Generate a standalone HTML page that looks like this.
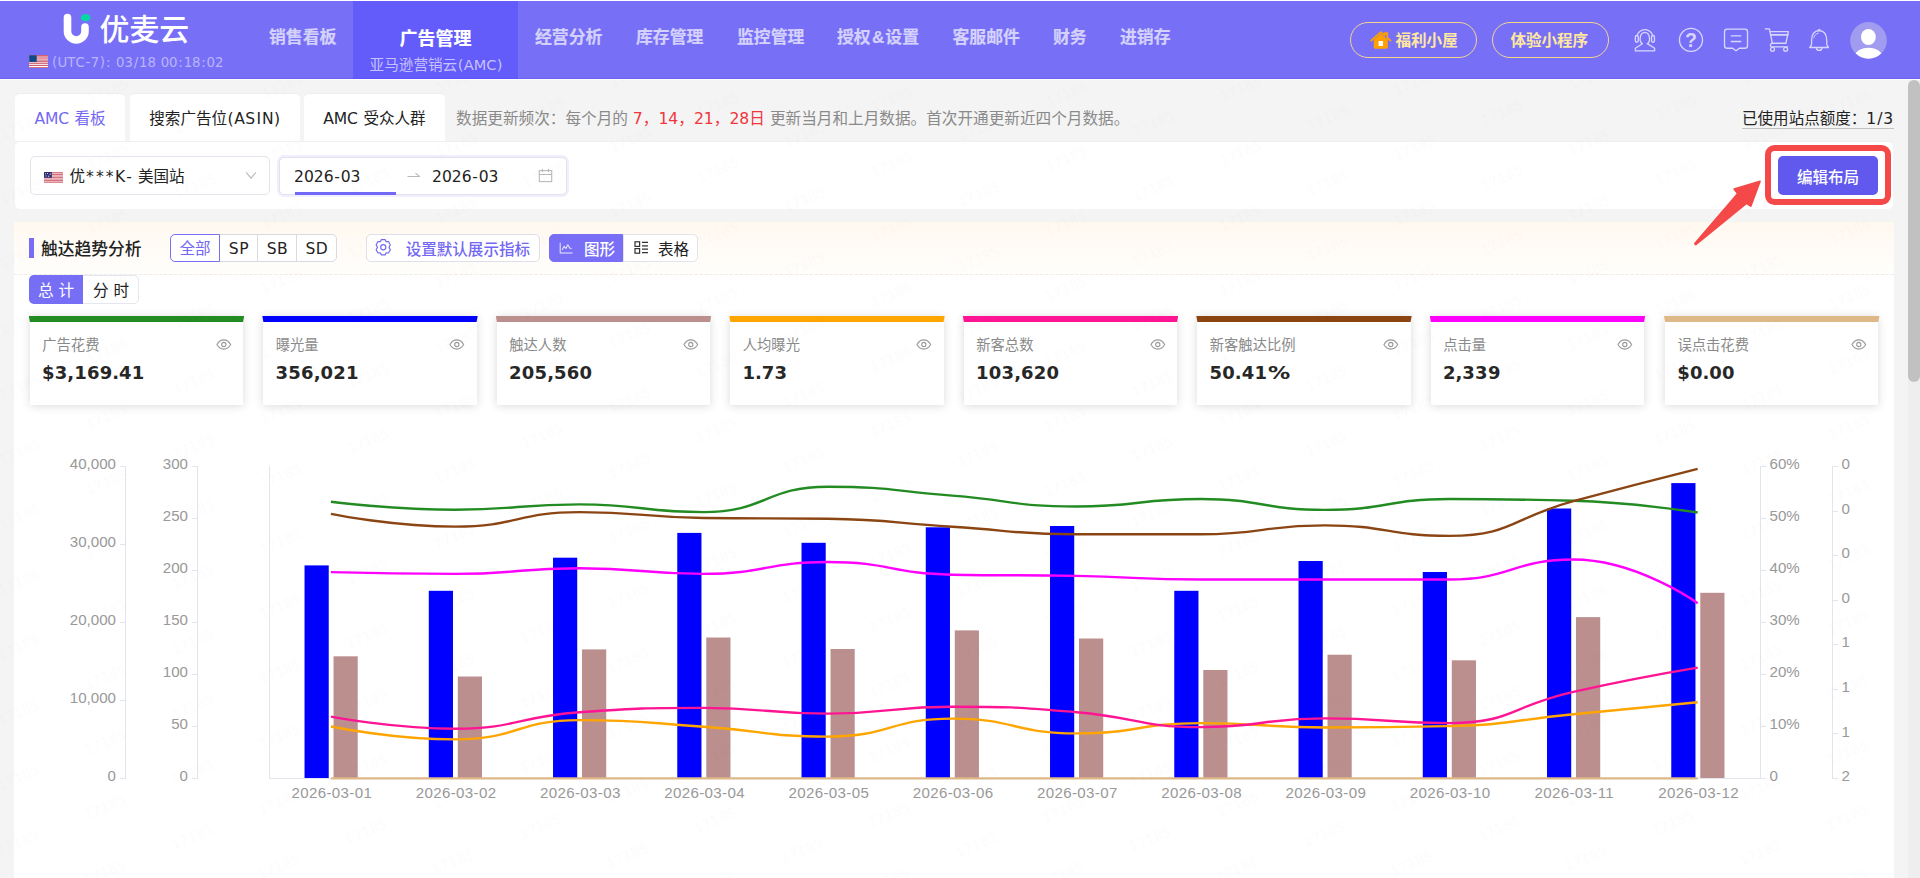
<!DOCTYPE html>
<html lang="zh-CN">
<head>
<meta charset="utf-8">
<title>优麦云 - AMC 看板</title>
<style>
*{box-sizing:border-box;margin:0;padding:0}
html,body{width:1920px;height:878px;overflow:hidden;background:#f4f4f4}
body{position:relative;font-family:"DejaVu Sans","Noto Sans CJK SC",sans-serif;font-size:15.55px;color:#222}
.abs{position:absolute}
.t{position:absolute;white-space:nowrap}
svg{display:block;overflow:visible}
/* header */
#topline{position:absolute;left:0;top:0;width:1920px;height:1px;background:#fff}
#hd{position:absolute;left:0;top:1px;width:1920px;height:79px;background:#7770f7}
#navact{position:absolute;left:353px;top:0;width:165px;height:78px;background:#635bfa}
.nav{position:absolute;top:25px;height:24px;line-height:24px;font-weight:bold;font-size:16.875px;color:#d4d1fc;-webkit-text-stroke:.2px #d4d1fc;white-space:nowrap;font-family:"Liberation Sans","Noto Sans CJK SC",sans-serif}
.pill{position:absolute;top:21px;height:36px;border:1.2px solid #f5d490;border-radius:18px}
.pill span{position:absolute;top:1px;height:33px;line-height:33px;color:#ffe7a0;font-weight:bold;font-size:15.55px;white-space:nowrap;font-family:"Liberation Sans","Noto Sans CJK SC",sans-serif}
.hic{position:absolute;fill:none;stroke:#d8d5fd;stroke-width:1.4;stroke-linecap:round;stroke-linejoin:round}
/* tabs */
.tab{position:absolute;top:93px;height:48px;border-top:1px solid #ededed;background:#fff;border-radius:5px 5px 0 0;text-align:center;line-height:50.4px;font-size:15.55px;white-space:nowrap}
.card{position:absolute;background:#fff;border-radius:5px}
.inp{position:absolute;top:156px;height:39px;background:#fff;border:1px solid #e3e5ec;border-radius:5px}
/* section */
.seg{position:absolute;top:234.2px;height:27.6px;line-height:29.6px;text-align:center;font-size:15.55px;border:1px solid #d9d9df;background:#fff;white-space:nowrap}
.kc{position:absolute;top:316px;width:213.2px;height:89px;background:#fff;box-shadow:0 1px 9px rgba(0,0,0,.15)}
.kc i{position:absolute;left:-1.2px;top:-0.4px;width:215.6px;height:6.4px;clip-path:polygon(0 0,100% 0,calc(100% - 1.2px) 100%,1.2px 100%)}
.kc .l{position:absolute;left:12.4px;top:19.3px;height:20px;line-height:20px;font-size:14.3px;color:#8a8a8a;white-space:nowrap}
.kc .v{position:absolute;left:12px;top:45px;height:24px;line-height:24px;font-size:18px;font-weight:bold;color:#272727;white-space:nowrap}
.kc svg{position:absolute;left:186px;top:22.8px}
</style>
</head>
<body>
<div id="topline"></div>
<div id="hd">
  <div id="navact"></div>
  <div class="abs" style="left:0;top:77px;width:1920px;height:1px;background:rgba(60,40,240,.16)"></div>
  <div class="abs" style="left:0;top:78px;width:1920px;height:1px;background:#fdfdf9"></div>
  <svg class="abs" style="left:60px;top:9px" width="34" height="36" viewBox="60 10 34 36">
    <path d="M67.5 17.5V31.25a8.75 8.75 0 0 0 17.5 0V27" fill="none" stroke="#fff" stroke-width="7.6" stroke-linecap="round"/>
    <ellipse cx="85.6" cy="17.6" rx="4.8" ry="3.6" fill="#06d6a6"/>
  </svg>
  <div class="t" style="left:99.5px;top:8.8px;height:40px;line-height:40px;font-size:29.9px;font-weight:500;color:#fff;font-family:'Liberation Sans','Noto Sans CJK SC',sans-serif">优麦云</div>
  <svg class="abs" style="left:29px;top:54.3px" width="19" height="13" viewBox="0 0 19 12.6" preserveAspectRatio="none">
    <rect width="19" height="12.6" fill="#e597a6"/>
    <rect y="0" width="19" height="1" fill="#cf6273"/>
    <rect y="4.5" width="19" height="0.9" fill="#f2cfd5"/>
    <rect y="5.4" width="19" height="1.3" fill="#cf687a"/>
    <rect y="6.7" width="19" height="1" fill="#f0c3ca"/>
    <rect y="7.7" width="19" height="0.9" fill="#c9596a"/>
    <rect y="8.6" width="19" height="1" fill="#fff"/>
    <rect y="9.6" width="19" height="0.9" fill="#b92a42"/>
    <rect y="10.5" width="19" height="1.3" fill="#fff"/>
    <rect y="11.8" width="19" height="0.8" fill="#d0626f"/>
    <rect x="0.2" y="0.3" width="7.5" height="6.4" fill="#0e4a85"/>
  </svg>
  <div class="t" style="left:51.5px;top:51.5px;height:20px;line-height:20px;font-size:13.3px;color:#b9b5fb"><span style="letter-spacing:0.85px;margin:0 -0.42px 0 0.42px">(</span>U<span style="letter-spacing:0.07px;margin:0 -0.04px 0 0.04px">T</span>C<span style="letter-spacing:1.24px;margin:0 -0.62px 0 0.62px">-</span>7<span style="letter-spacing:0.85px;margin:0 -0.42px 0 0.42px">)</span><span style="letter-spacing:1.56px;margin:0 -0.78px 0 0.78px">:</span><span style="letter-spacing:0.45px;margin:0 -0.23px 0 0.23px"> </span>03<span style="letter-spacing:1.56px;margin:0 -0.78px 0 0.78px">/</span>18<span style="letter-spacing:0.45px;margin:0 -0.23px 0 0.23px"> </span>00<span style="letter-spacing:1.56px;margin:0 -0.78px 0 0.78px">:</span>18<span style="letter-spacing:1.56px;margin:0 -0.78px 0 0.78px">:</span>02</div>

  <div class="nav" style="left:269px">销售看板</div>
  <div class="nav" style="left:399.5px;color:#fff;-webkit-text-stroke-color:#fff;font-size:18px;top:26px">广告管理</div>
  <div class="t" style="left:353.8px;width:165px;text-align:center;top:53px;height:22px;line-height:22px;font-size:14.625px;color:#c6c2fb">亚马逊营销云<span style="letter-spacing:0.94px;margin:0 -0.47px 0 0.47px">(</span>A<span style="letter-spacing:-0.29px;margin:0 0.14px 0 -0.14px">M</span>C<span style="letter-spacing:0.94px;margin:0 -0.47px 0 0.47px">)</span></div>
  <div class="nav" style="left:535px">经营分析</div>
  <div class="nav" style="left:636px">库存管理</div>
  <div class="nav" style="left:737px">监控管理</div>
  <div class="nav" style="left:837px">授权<span style="margin:0 1.2px">&amp;</span>设置</div>
  <div class="nav" style="left:952.5px">客服邮件</div>
  <div class="nav" style="left:1053px">财务</div>
  <div class="nav" style="left:1120px">进销存</div>

  <div class="pill" style="left:1350px;width:127px">
    <svg class="abs" style="left:18.9px;top:7.8px" width="21.6" height="18.8" viewBox="0 0 23 20">
      <path d="M1.2 10.2L11.5 1.2L15.6 4.8V2.4H18.4V7.2L21.8 10.2" fill="none" stroke="#ffa000" stroke-width="2" stroke-linejoin="round" stroke-linecap="round"/>
      <path d="M4 9.4L11.5 3L19 9.4V17.6a1.2 1.2 0 0 1-1.2 1.2H5.2A1.2 1.2 0 0 1 4 17.6Z" fill="#ffa000"/>
      <rect x="9.1" y="10.6" width="4.8" height="5.4" rx="0.6" fill="#fff"/>
    </svg>
    <span style="left:44.5px">福利小屋</span>
  </div>
  <div class="pill" style="left:1491.5px;width:117px"><span style="left:0;width:113.5px;text-align:center">体验小程序</span></div>
  <!-- right icons -->
  <svg class="abs" style="left:1625px;top:17px" width="140" height="44" viewBox="0 0 1920 603" fill="none" stroke="#d9d6fd" stroke-width="18" stroke-linecap="round" stroke-linejoin="round">
    <path d="M238 352C192 328 196 198 272 196C348 198 352 328 306 352L406 414V450H142V414Z"/>
    <path d="M166 244A108 98 0 0 1 380 244"/>
    <rect x="142" y="240" width="40" height="92" rx="19"/>
    <rect x="364" y="240" width="40" height="92" rx="19"/>
    <circle cx="905" cy="300" r="158"/>
    <path d="M1400 152H1645A35 35 0 0 1 1680 187V380A35 35 0 0 1 1645 415H1568L1522 450L1476 415H1400A35 35 0 0 1 1365 380V187A35 35 0 0 1 1400 152Z"/>
    <path d="M1458 246H1588M1458 322H1588"/>
  </svg>
  <div class="t" style="left:1678px;width:26px;text-align:center;top:27.3px;height:24px;line-height:24px;font-size:19.5px;font-weight:bold;color:#d9d6fd;font-family:'Liberation Sans',sans-serif">?</div>
  <svg class="abs" style="left:1755px;top:17px" width="140" height="44" viewBox="0 0 1920 603" fill="none" stroke="#d9d6fd" stroke-width="18" stroke-linecap="round" stroke-linejoin="round">
    <path d="M142 150H198L238 346"/>
    <path d="M206 186H458L424 346H238"/>
    <path d="M216 232H448" stroke-width="24"/>
    <path d="M238 346C204 350 200 396 236 396H446"/>
    <circle cx="240" cy="430" r="27"/>
    <circle cx="420" cy="430" r="27"/>
    <path d="M880 174C800 178 776 244 776 312V358C776 386 752 388 752 404H1006C1006 388 984 386 984 358V312C984 244 960 178 880 174Z"/>
    <path d="M866 168A15 15 0 0 1 894 168"/>
    <path d="M842 412C848 454 912 454 918 412"/>
    <path d="M806 272C814 236 836 216 868 208" stroke-width="13"/>
  </svg>
  <svg class="abs" style="left:1850px;top:20.8px" width="37" height="37" viewBox="0 0 37 37">
    <defs><clipPath id="avc"><circle cx="18.5" cy="18.4" r="18.3"/></clipPath></defs>
    <circle cx="18.5" cy="18.4" r="18.3" fill="#a19cf0"/>
    <g clip-path="url(#avc)" fill="#fff">
      <ellipse cx="18.4" cy="15" rx="7.4" ry="8.1"/>
      <ellipse cx="18.5" cy="36.3" rx="14.6" ry="10.6"/>
    </g>
  </svg>
</div>
<!-- tabs -->
<div class="tab" style="left:15px;width:110px;color:#7468f2">A<span style="letter-spacing:-0.31px;margin:0 0.15px 0 -0.15px">M</span>C<span style="letter-spacing:0.52px;margin:0 -0.26px 0 0.26px"> </span>看板</div>
<div class="tab" style="left:130px;width:170px">搜索广告位<span style="letter-spacing:0.99px;margin:0 -0.49px 0 0.49px">(</span>A<span style="letter-spacing:0.76px;margin:0 -0.38px 0 0.38px">S</span><span style="letter-spacing:1.96px;margin:0 -0.98px 0 0.98px">I</span>N<span style="letter-spacing:0.99px;margin:0 -0.49px 0 0.49px">)</span></div>
<div class="tab" style="left:304px;width:141px">A<span style="letter-spacing:-0.31px;margin:0 0.15px 0 -0.15px">M</span>C<span style="letter-spacing:0.52px;margin:0 -0.26px 0 0.26px"> </span>受众人群</div>
<div class="t" style="left:456px;top:107px;height:24px;line-height:24px;font-size:15.63px;color:#8a8a8a">数据更新频次：每个月的 <span style="color:#f0353c">7，14，21，28日</span> 更新当月和上月数据。首次开通更新近四个月数据。</div>
<div class="t" style="left:1742px;top:107px;width:152px;height:22px;line-height:24px;font-size:15.55px;color:#222;border-bottom:1px solid #c2c2c2">已使用站点额度：1<span style="letter-spacing:1.82px;margin:0 -0.91px 0 0.91px">/</span>3</div>
<!-- filter card -->
<div class="abs" style="left:15px;top:141px;width:1878px;height:1px;background:#f0f0f0"></div>
<div class="card" style="left:15px;top:142px;width:1878.3px;height:67px"></div>
<div class="inp" style="left:30px;width:240px">
  <svg class="abs" style="left:13px;top:15px" width="19" height="11" viewBox="0 0 19 11">
    <rect width="19" height="11" fill="#e9b4ba"/>
    <g fill="#d4707d"><rect y="0.1" width="19" height="0.8"/><rect y="2" width="19" height="1"/><rect y="4.9" width="19" height="1"/><rect y="7.9" width="19" height="1.1"/><rect y="10.2" width="19" height="0.6"/></g>
    <rect width="7.8" height="5.8" fill="#2e2d72"/>
    <g fill="#cfcfe6"><rect x="1" y="1.3" width="1" height="1"/><rect x="3" y="1" width="1" height="1"/><rect x="5.6" y="1.6" width="1.4" height="1"/><rect x="1.6" y="3.4" width="1" height="1.2"/><rect x="4.2" y="3.6" width="1" height="1.4"/></g>
  </svg>
  <div class="t" style="left:38.5px;top:8px;height:24px;line-height:24px;font-size:15.55px;color:#222">优<span style="letter-spacing:2.11px;margin:0 -1.05px 0 1.05px">***</span><span style="letter-spacing:0.58px;margin:0 -0.29px 0 0.29px">K</span><span style="letter-spacing:1.45px;margin:0 -0.72px 0 0.72px">-</span><span style="letter-spacing:0.52px;margin:0 -0.26px 0 0.26px"> </span>美国站</div>
  <svg class="abs" style="left:214.2px;top:14px" width="12" height="9" viewBox="0 0 12 9"><path d="M1.200 1.400L6 7.200L10.800 1.400" fill="none" stroke="#c0c0c0" stroke-width="1.200"/></svg>
</div>
<div class="inp" style="left:279px;top:157px;height:38px;width:288px;border-color:#e2e2ee;box-shadow:0 0 0 2px #f1effd">
  <div class="t" style="left:14px;top:7px;height:24px;line-height:24px;font-size:15.55px;color:#222">2026<span style="letter-spacing:1.45px;margin:0 -0.72px 0 0.72px">-</span>03</div>
  <div class="abs" style="left:15px;top:34px;width:101px;height:3px;background:#7168f5"></div>
  <svg class="abs" style="left:125.8px;top:12px" width="15" height="10" viewBox="0 0 15 10"><path d="M1.500 6.500H13.500L9.500 3.200" fill="none" stroke="#b9b9b9" stroke-width="1.100" stroke-linejoin="round"/></svg>
  <div class="t" style="left:152px;top:7px;height:24px;line-height:24px;font-size:15.55px;color:#222">2026<span style="letter-spacing:1.45px;margin:0 -0.72px 0 0.72px">-</span>03</div>
  <svg class="abs" style="left:257.5px;top:9.5px" width="15" height="15" viewBox="0 0 15 15"><g fill="none" stroke="#b9b9b9" stroke-width="1.100"><rect x="1.300" y="2.600" width="12.400" height="11"/><path d="M1.300 6.500H13.700M4.500 1V4M10.500 1V4"/></g></svg>
</div>
<!-- edit button + annotation -->
<div class="abs" style="left:1778px;top:156px;width:100px;height:39px;border-radius:5px;background:#6159ee;color:#fff;text-align:center;line-height:44.5px;font-size:15.55px;font-weight:500;white-space:nowrap">编辑布局</div>
<div class="abs" style="left:1765.2px;top:145.1px;width:126.2px;height:60.4px;border:6.5px solid #f54848;border-radius:9.5px"></div>
<svg class="abs" style="left:1690px;top:175px;z-index:9" width="76" height="74" viewBox="1690 175 76 74">
  <path d="M1760 181.3L1734.2 189L1737.8 193.6L1694.9 243.6L1695.7 244.5L1746.4 203.2L1750.8 206Z" fill="#f54848" stroke="#f54848" stroke-width="1.8" stroke-linejoin="round"/>
</svg>
<!-- section -->
<div class="abs" style="left:14px;top:222px;width:1880.3px;height:656px;background:#fff"></div>
<div class="abs" style="left:14px;top:222px;width:1880.3px;height:52.8px;background:linear-gradient(180deg,#fff8ee 0%,#fffbf6 45%,#fffefc 100%);border-bottom:1px dashed #ededed"></div>
<div class="abs" style="left:29px;top:238px;width:4.5px;height:20px;background:#786df6"></div>
<div class="t" style="left:41px;top:236.6px;height:25px;line-height:25px;font-size:16.75px;font-weight:500;color:#222">触达趋势分析</div>
<div class="seg" style="left:170px;width:50px;border-color:#7a70f5;color:#7468f2;border-radius:5px 0 0 5px;z-index:2">全部</div>
<div class="seg" style="left:219px;width:39px"><span style="letter-spacing:0.76px;margin:0 -0.38px 0 0.38px">S</span>P</div>
<div class="seg" style="left:257px;width:40px"><span style="letter-spacing:0.76px;margin:0 -0.38px 0 0.38px">S</span>B</div>
<div class="seg" style="left:296px;width:41px;border-radius:0 5px 5px 0"><span style="letter-spacing:0.76px;margin:0 -0.38px 0 0.38px">S</span>D</div>
<div class="seg" style="left:366px;width:173.7px;border-radius:5px;border-color:#dfdfe8">
  <svg class="abs" style="left:6.7px;top:3.1px" width="18.5" height="18.5" viewBox="0 0 18 18"><g fill="none" stroke="#7468f2" stroke-width="1.150" stroke-linejoin="round"><path d="M7.200 1.500h3.600l1 2.100 2.300-.200 1.800 3.100L14.600 9l1.300 2.500-1.800 3.100-2.300-.200-1 2.100H7.200l-1-2.100-2.300.2-1.800-3.100L3.400 9 2.100 6.500l1.800-3.100 2.300.2Z"/><circle cx="9" cy="9" r="2.500"/></g></svg>
  <div class="t" style="left:38.7px;top:2.5px;height:25.5px;line-height:25.5px;font-size:15.55px;font-weight:500;color:#7468f2">设置默认展示指标</div>
</div>
<div class="seg" style="left:549px;width:74px;border-radius:5px 0 0 5px;background:#786ff6;border-color:#786ff6;color:#fff">
  <svg class="abs" style="left:9.3px;top:6.6px" width="14.4" height="12.4" viewBox="0 0 15 13"><path d="M1.200 0.800V11.500H14.200M3.200 8.200L5.400 4.600 7.200 6.800 9.200 3 11.200 6.200 13.200 7.200" fill="none" stroke="#e9e7fe" stroke-width="1.1" stroke-linejoin="round"/></svg>
  <div class="t" style="left:34px;top:3.3px;height:25.5px;line-height:25.5px;font-weight:500">图形</div>
</div>
<div class="seg" style="left:622.8px;width:75px;border-radius:0 5px 5px 0;border-color:#e3e3ea">
  <svg class="abs" style="left:10.2px;top:6.2px" width="15" height="13" viewBox="0 0 15 13"><g fill="none" stroke="#333" stroke-width="1.200"><rect x="1" y="0.800" width="4.600" height="4.600"/><rect x="1" y="7.600" width="4.600" height="4.600"/><path d="M8 1.400H14M8 4.800H14M8 8.200H14M8 11.600H14"/></g></svg>
  <div class="t" style="left:34.2px;top:3.3px;height:25.5px;line-height:25.5px;color:#222">表格</div>
</div>
<div class="abs" style="left:29px;top:275px;width:110px;height:29px;border:1px solid #e6e6ee;border-radius:5px;background:#fff"></div>
<div class="abs" style="left:29px;top:275px;width:54px;height:29px;border-radius:5px 0 0 5px;background:#776ef6;color:#fff;text-align:center;line-height:32.4px;font-size:15.55px;white-space:pre">总 计</div>
<div class="abs" style="left:83px;top:275px;width:56px;height:29px;color:#222;text-align:center;line-height:32.4px;font-size:15.55px;white-space:pre">分 时</div>
<div class="kc" style="left:29.9px"><i style="background:#228b22"></i><div class="l">广告花费</div><svg width="15.6" height="11" viewBox="0 0 17 12"><g fill="none" stroke="#999" stroke-width="1.200"><path d="M1 6C3 2.600 5.600 1 8.500 1S14 2.600 16 6C14 9.400 11.400 11 8.500 11S3 9.400 1 6Z"/><circle cx="8.500" cy="6" r="2.300"/></g></svg><div class="v"><span style="letter-spacing:0.27px;margin:0 -0.14px 0 0.14px">$3</span><span style="letter-spacing:-0.33px;margin:0 0.17px 0 -0.17px">,</span><span style="letter-spacing:0.27px;margin:0 -0.14px 0 0.14px">169</span><span style="letter-spacing:-0.33px;margin:0 0.17px 0 -0.17px">.</span><span style="letter-spacing:0.27px;margin:0 -0.14px 0 0.14px">41</span></div></div>
<div class="kc" style="left:263.4px"><i style="background:#0000ff"></i><div class="l">曝光量</div><svg width="15.6" height="11" viewBox="0 0 17 12"><g fill="none" stroke="#999" stroke-width="1.200"><path d="M1 6C3 2.600 5.600 1 8.500 1S14 2.600 16 6C14 9.400 11.400 11 8.500 11S3 9.400 1 6Z"/><circle cx="8.500" cy="6" r="2.300"/></g></svg><div class="v"><span style="letter-spacing:0.27px;margin:0 -0.14px 0 0.14px">356</span><span style="letter-spacing:-0.33px;margin:0 0.17px 0 -0.17px">,</span><span style="letter-spacing:0.27px;margin:0 -0.14px 0 0.14px">021</span></div></div>
<div class="kc" style="left:496.9px"><i style="background:#bc8f8f"></i><div class="l">触达人数</div><svg width="15.6" height="11" viewBox="0 0 17 12"><g fill="none" stroke="#999" stroke-width="1.200"><path d="M1 6C3 2.600 5.600 1 8.500 1S14 2.600 16 6C14 9.400 11.400 11 8.500 11S3 9.400 1 6Z"/><circle cx="8.500" cy="6" r="2.300"/></g></svg><div class="v"><span style="letter-spacing:0.27px;margin:0 -0.14px 0 0.14px">205</span><span style="letter-spacing:-0.33px;margin:0 0.17px 0 -0.17px">,</span><span style="letter-spacing:0.27px;margin:0 -0.14px 0 0.14px">560</span></div></div>
<div class="kc" style="left:730.4px"><i style="background:#ffa500"></i><div class="l">人均曝光</div><svg width="15.6" height="11" viewBox="0 0 17 12"><g fill="none" stroke="#999" stroke-width="1.200"><path d="M1 6C3 2.600 5.600 1 8.500 1S14 2.600 16 6C14 9.400 11.400 11 8.500 11S3 9.400 1 6Z"/><circle cx="8.500" cy="6" r="2.300"/></g></svg><div class="v"><span style="letter-spacing:0.27px;margin:0 -0.14px 0 0.14px">1</span><span style="letter-spacing:-0.33px;margin:0 0.17px 0 -0.17px">.</span><span style="letter-spacing:0.27px;margin:0 -0.14px 0 0.14px">73</span></div></div>
<div class="kc" style="left:963.9px"><i style="background:#ff1493"></i><div class="l">新客总数</div><svg width="15.6" height="11" viewBox="0 0 17 12"><g fill="none" stroke="#999" stroke-width="1.200"><path d="M1 6C3 2.600 5.600 1 8.500 1S14 2.600 16 6C14 9.400 11.400 11 8.500 11S3 9.400 1 6Z"/><circle cx="8.500" cy="6" r="2.300"/></g></svg><div class="v"><span style="letter-spacing:0.27px;margin:0 -0.14px 0 0.14px">103</span><span style="letter-spacing:-0.33px;margin:0 0.17px 0 -0.17px">,</span><span style="letter-spacing:0.27px;margin:0 -0.14px 0 0.14px">620</span></div></div>
<div class="kc" style="left:1197.4px"><i style="background:#8b4513"></i><div class="l">新客触达比例</div><svg width="15.6" height="11" viewBox="0 0 17 12"><g fill="none" stroke="#999" stroke-width="1.200"><path d="M1 6C3 2.600 5.600 1 8.500 1S14 2.600 16 6C14 9.400 11.400 11 8.500 11S3 9.400 1 6Z"/><circle cx="8.500" cy="6" r="2.300"/></g></svg><div class="v"><span style="letter-spacing:0.27px;margin:0 -0.14px 0 0.14px">50</span><span style="letter-spacing:-0.33px;margin:0 0.17px 0 -0.17px">.</span><span style="letter-spacing:0.27px;margin:0 -0.14px 0 0.14px">41</span><span style="display:inline-block;transform:scaleX(1.23);transform-origin:0 50%;margin-left:.5px">%</span></div></div>
<div class="kc" style="left:1430.9px"><i style="background:#ff00ff"></i><div class="l">点击量</div><svg width="15.6" height="11" viewBox="0 0 17 12"><g fill="none" stroke="#999" stroke-width="1.200"><path d="M1 6C3 2.600 5.600 1 8.500 1S14 2.600 16 6C14 9.400 11.400 11 8.500 11S3 9.400 1 6Z"/><circle cx="8.500" cy="6" r="2.300"/></g></svg><div class="v"><span style="letter-spacing:0.27px;margin:0 -0.14px 0 0.14px">2</span><span style="letter-spacing:-0.33px;margin:0 0.17px 0 -0.17px">,</span><span style="letter-spacing:0.27px;margin:0 -0.14px 0 0.14px">339</span></div></div>
<div class="kc" style="left:1665.1px"><i style="background:#deb887"></i><div class="l">误点击花费</div><svg width="15.6" height="11" viewBox="0 0 17 12"><g fill="none" stroke="#999" stroke-width="1.200"><path d="M1 6C3 2.600 5.600 1 8.500 1S14 2.600 16 6C14 9.400 11.400 11 8.500 11S3 9.400 1 6Z"/><circle cx="8.500" cy="6" r="2.300"/></g></svg><div class="v"><span style="letter-spacing:0.27px;margin:0 -0.14px 0 0.14px">$0</span><span style="letter-spacing:-0.33px;margin:0 0.17px 0 -0.17px">.</span><span style="letter-spacing:0.27px;margin:0 -0.14px 0 0.14px">00</span></div></div>
<div>
<svg id="chart" class="abs" style="left:0;top:440px" width="1905" height="438" viewBox="0 440 1905 438">
<g stroke="#e2e5ee" stroke-width="1" fill="none" shape-rendering="crispEdges">
<path d="M125.5 466V778.5"/>
<path d="M120 466.5H125.5"/>
<path d="M120 544.5H125.5"/>
<path d="M120 622.5H125.5"/>
<path d="M120 700.5H125.5"/>
<path d="M120 778.5H125.5"/>
<path d="M197.5 466V778.5"/>
<path d="M192 466.5H197.5"/>
<path d="M192 518.5H197.5"/>
<path d="M192 570.5H197.5"/>
<path d="M192 622.5H197.5"/>
<path d="M192 674.5H197.5"/>
<path d="M192 726.5H197.5"/>
<path d="M192 778.5H197.5"/>
<path d="M269.5 466V778.5"/>
<path d="M269.5 778.5H1760.5"/>
<path d="M1760.5 466V778.5"/>
<path d="M1760.5 466.5H1766"/>
<path d="M1760.5 518.5H1766"/>
<path d="M1760.5 570.5H1766"/>
<path d="M1760.5 622.5H1766"/>
<path d="M1760.5 674.5H1766"/>
<path d="M1760.5 726.5H1766"/>
<path d="M1760.5 778.5H1766"/>
<path d="M1832.5 466V778.5"/>
<path d="M1832.5 466.5H1838"/>
<path d="M1832.5 511.5H1838"/>
<path d="M1832.5 555.5H1838"/>
<path d="M1832.5 600.5H1838"/>
<path d="M1832.5 644.5H1838"/>
<path d="M1832.5 689.5H1838"/>
<path d="M1832.5 733.5H1838"/>
<path d="M1832.5 778.5H1838"/>
</g>
<g>
<rect x="304.53" y="565.4" width="24.20" height="212.6" fill="#0000ff"/>
<rect x="333.53" y="656.3" width="24.20" height="121.7" fill="#bc8f8f"/>
<rect x="428.78" y="590.8" width="24.20" height="187.2" fill="#0000ff"/>
<rect x="457.78" y="676.5" width="24.20" height="101.5" fill="#bc8f8f"/>
<rect x="553.02" y="557.7" width="24.20" height="220.3" fill="#0000ff"/>
<rect x="582.02" y="649.4" width="24.20" height="128.6" fill="#bc8f8f"/>
<rect x="677.27" y="532.9" width="24.20" height="245.1" fill="#0000ff"/>
<rect x="706.27" y="637.5" width="24.20" height="140.5" fill="#bc8f8f"/>
<rect x="801.52" y="542.8" width="24.20" height="235.2" fill="#0000ff"/>
<rect x="830.52" y="649.0" width="24.20" height="129.0" fill="#bc8f8f"/>
<rect x="925.77" y="527.3" width="24.20" height="250.7" fill="#0000ff"/>
<rect x="954.77" y="630.4" width="24.20" height="147.6" fill="#bc8f8f"/>
<rect x="1050.02" y="526.0" width="24.20" height="252.0" fill="#0000ff"/>
<rect x="1079.02" y="638.5" width="24.20" height="139.5" fill="#bc8f8f"/>
<rect x="1174.27" y="590.8" width="24.20" height="187.2" fill="#0000ff"/>
<rect x="1203.27" y="670.0" width="24.20" height="108.0" fill="#bc8f8f"/>
<rect x="1298.52" y="561.0" width="24.20" height="217.0" fill="#0000ff"/>
<rect x="1327.52" y="654.7" width="24.20" height="123.3" fill="#bc8f8f"/>
<rect x="1422.77" y="572.0" width="24.20" height="206.0" fill="#0000ff"/>
<rect x="1451.77" y="660.3" width="24.20" height="117.7" fill="#bc8f8f"/>
<rect x="1547.02" y="508.5" width="24.20" height="269.5" fill="#0000ff"/>
<rect x="1576.02" y="617.1" width="24.20" height="160.9" fill="#bc8f8f"/>
<rect x="1671.27" y="483.1" width="24.20" height="294.9" fill="#0000ff"/>
<rect x="1700.27" y="592.8" width="24.20" height="185.2" fill="#bc8f8f"/>
</g>
<g fill="none" stroke-width="2.4" stroke-linejoin="round">
<path stroke="#228b22" d="M330.93 501.80C330.93 501.80 393.02 509.70 455.18 509.70C517.27 509.70 517.33 504.40 579.42 504.40C641.58 504.40 642.13 512.10 703.67 512.10C766.38 512.10 765.24 486.70 827.92 486.70C889.49 486.70 890.09 490.65 952.17 495.60C1014.34 500.55 1014.24 506.50 1076.42 506.50C1138.49 506.50 1138.61 499.00 1200.67 499.00C1262.86 499.00 1262.80 509.90 1324.92 509.90C1387.05 509.90 1386.93 499.00 1449.17 499.00C1511.18 499.00 1511.43 499.00 1573.42 500.80C1635.68 502.61 1697.67 512.50 1697.67 512.50"/>
<path stroke="#ffa500" d="M330.93 726.50C330.93 726.50 393.25 739.40 455.18 739.40C517.50 739.40 516.97 720.10 579.42 720.10C641.22 720.10 641.60 722.58 703.67 726.70C765.85 730.83 766.02 736.60 827.92 736.60C890.27 736.60 889.95 718.60 952.17 718.60C1014.20 718.60 1014.19 733.40 1076.42 733.40C1138.44 733.40 1138.46 723.10 1200.67 723.10C1262.71 723.10 1262.78 727.50 1324.92 727.50C1387.03 727.50 1387.19 727.50 1449.17 726.10C1511.44 724.69 1511.30 720.15 1573.42 714.20C1635.55 708.25 1697.67 702.30 1697.67 702.30"/>
<path stroke="#ff1493" d="M330.93 716.60C330.93 716.60 393.17 728.70 455.18 728.70C517.42 728.70 517.05 716.54 579.42 712.20C641.30 707.90 641.56 707.90 703.67 707.90C765.81 707.90 765.82 713.60 827.92 713.60C890.07 713.60 890.03 706.70 952.17 706.70C1014.28 706.70 1014.49 707.12 1076.42 712.20C1138.74 717.32 1138.40 727.10 1200.67 727.10C1262.65 727.10 1262.75 718.40 1324.92 718.40C1387.00 718.40 1387.98 723.10 1449.17 723.10C1512.23 723.10 1510.92 705.76 1573.42 691.80C1635.17 678.01 1697.67 667.60 1697.67 667.60"/>
<path stroke="#8b4513" d="M330.93 513.90C330.93 513.90 393.10 526.60 455.18 526.60C517.35 526.60 517.12 512.10 579.42 512.10C641.37 512.10 641.52 517.20 703.67 518.00C765.77 518.80 765.86 518.00 827.92 518.80C890.11 519.60 890.04 522.92 952.17 526.80C1014.29 530.67 1014.24 534.30 1076.42 534.30C1138.49 534.30 1138.63 534.30 1200.67 534.30C1262.88 534.30 1262.83 525.40 1324.92 525.40C1387.08 525.40 1388.11 535.90 1449.17 535.90C1512.36 535.90 1511.15 517.99 1573.42 501.20C1635.40 484.49 1697.67 468.90 1697.67 468.90"/>
<path stroke="#ff00ff" d="M330.93 572.10C330.93 572.10 393.08 573.90 455.18 573.90C517.33 573.90 517.30 568.20 579.42 568.20C641.55 568.20 641.66 573.90 703.67 573.90C765.91 573.90 765.82 562.00 827.92 562.00C890.07 562.00 889.89 573.49 952.17 574.70C1014.14 575.90 1014.31 574.70 1076.42 575.90C1138.56 577.10 1138.54 579.50 1200.67 579.50C1262.79 579.50 1262.80 579.50 1324.92 579.50C1387.05 579.50 1387.45 579.50 1449.17 579.50C1511.70 579.50 1512.72 559.50 1573.42 559.50C1636.97 559.50 1697.67 603.30 1697.67 603.30"/>
<path stroke="#deb887" d="M330.93 778.4H1697.67"/>
</g>
<g font-family="'Liberation Sans','Noto Sans CJK SC',sans-serif" font-size="15.1" fill="#999">
<text x="116" y="469.1" text-anchor="end">40,000</text>
<text x="116" y="547.1" text-anchor="end">30,000</text>
<text x="116" y="625.1" text-anchor="end">20,000</text>
<text x="116" y="703.1" text-anchor="end">10,000</text>
<text x="116" y="781.1" text-anchor="end">0</text>
<text x="188" y="469.1" text-anchor="end">300</text>
<text x="188" y="521.1" text-anchor="end">250</text>
<text x="188" y="573.1" text-anchor="end">200</text>
<text x="188" y="625.1" text-anchor="end">150</text>
<text x="188" y="677.1" text-anchor="end">100</text>
<text x="188" y="729.1" text-anchor="end">50</text>
<text x="188" y="781.1" text-anchor="end">0</text>
<text x="1769.5" y="469.1">60%</text>
<text x="1769.5" y="521.1">50%</text>
<text x="1769.5" y="573.1">40%</text>
<text x="1769.5" y="625.1">30%</text>
<text x="1769.5" y="677.1">20%</text>
<text x="1769.5" y="729.1">10%</text>
<text x="1769.5" y="781.1">0</text>
<text x="1841.5" y="469.1">0</text>
<text x="1841.5" y="513.7">0</text>
<text x="1841.5" y="558.2">0</text>
<text x="1841.5" y="602.8">0</text>
<text x="1841.5" y="647.4">1</text>
<text x="1841.5" y="692.0">1</text>
<text x="1841.5" y="736.5">1</text>
<text x="1841.5" y="781.1">2</text>
<text x="331.8" y="798" text-anchor="middle" letter-spacing="0.35">2026-03-01</text>
<text x="456.1" y="798" text-anchor="middle" letter-spacing="0.35">2026-03-02</text>
<text x="580.3" y="798" text-anchor="middle" letter-spacing="0.35">2026-03-03</text>
<text x="704.6" y="798" text-anchor="middle" letter-spacing="0.35">2026-03-04</text>
<text x="828.8" y="798" text-anchor="middle" letter-spacing="0.35">2026-03-05</text>
<text x="953.1" y="798" text-anchor="middle" letter-spacing="0.35">2026-03-06</text>
<text x="1077.3" y="798" text-anchor="middle" letter-spacing="0.35">2026-03-07</text>
<text x="1201.6" y="798" text-anchor="middle" letter-spacing="0.35">2026-03-08</text>
<text x="1325.8" y="798" text-anchor="middle" letter-spacing="0.35">2026-03-09</text>
<text x="1450.1" y="798" text-anchor="middle" letter-spacing="0.35">2026-03-10</text>
<text x="1574.3" y="798" text-anchor="middle" letter-spacing="0.35">2026-03-11</text>
<text x="1698.6" y="798" text-anchor="middle" letter-spacing="0.35">2026-03-12</text>
</g>
</svg>
</div>
<!-- watermark -->
<svg class="abs" style="left:0;top:80px;z-index:20;pointer-events:none" width="1905" height="798" viewBox="0 80 1905 798">
  <defs>
    <pattern id="wm" width="86.65" height="64.8" patternUnits="userSpaceOnUse" patternTransform="matrix(1.0054 -0.0015 -0.0047 1.0045 -4.035 0.597) matrix(1 0.3439 0 1 848.6 116.6)">
      <text transform="translate(43.3 32.4) matrix(1 -0.3439 0 1 0 0) rotate(-22.5)" text-anchor="middle" y="5.1" font-family="'DejaVu Sans','Liberation Sans',sans-serif" font-size="13.7" fill="#000" fill-opacity="0.012">17185</text>
    </pattern>
  </defs>
  <rect x="0" y="80" width="1905" height="798" fill="url(#wm)"/>
</svg>
<!-- scrollbar -->
<div class="abs" style="left:1908px;top:80px;width:12px;height:798px;background:#eee"></div>
<div class="abs" style="left:1908px;top:79.6px;width:12px;height:302.4px;border-radius:6px;background:#c1c1c1"></div>
</body>
</html>
